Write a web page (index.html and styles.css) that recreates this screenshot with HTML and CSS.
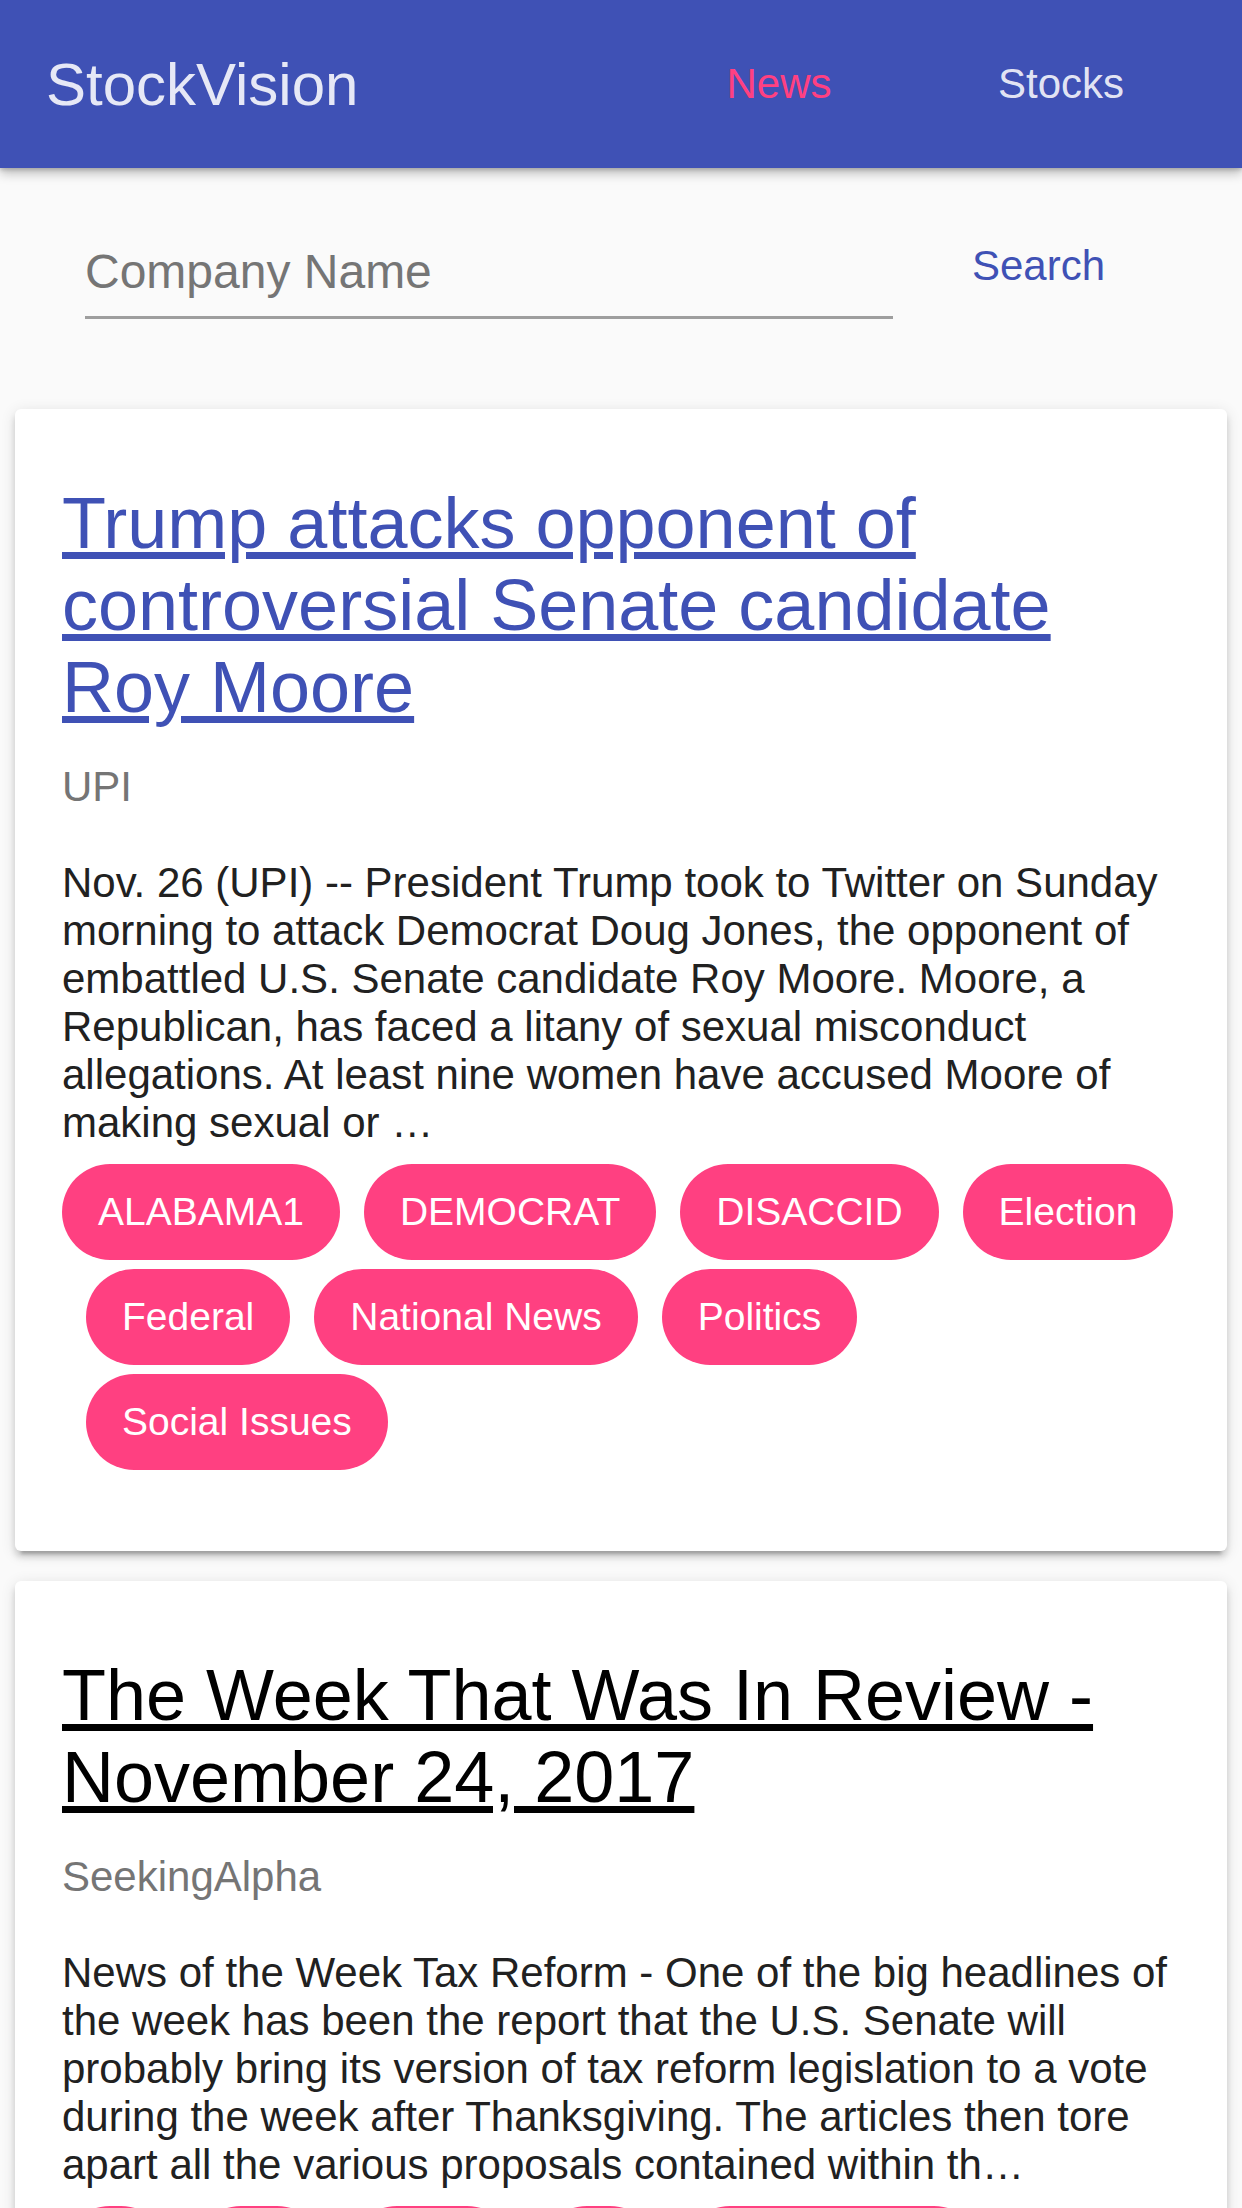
FILE: index.html
```html
<!DOCTYPE html>
<html lang="en">
<head>
<meta charset="utf-8">
<title>StockVision</title>
<link rel="stylesheet" href="styles.css">
</head>
<body>
<header class="topbar">
  <div class="logo">StockVision</div>
  <nav class="tabs">
    <a class="tab tab-active" href="#">News</a>
    <a class="tab" href="#">Stocks</a>
  </nav>
</header>

<section class="search">
  <input class="search-input" type="text" placeholder="Company Name">
  <button class="search-btn" type="button">Search</button>
</section>

<main class="feed">
  <article class="card">
    <a class="card-title" href="#">Trump attacks opponent of controversial Senate candidate Roy Moore</a>
    <div class="card-source">UPI</div>
    <p class="card-desc">Nov. 26 (UPI) -- President Trump took to Twitter on Sunday morning to attack Democrat Doug Jones, the opponent of embattled U.S. Senate candidate Roy Moore. Moore, a Republican, has faced a litany of sexual misconduct allegations. At least nine women have accused Moore of making sexual or …</p>
    <div class="chips">
      <span class="chip">ALABAMA1</span>
      <span class="chip">DEMOCRAT</span>
      <span class="chip">DISACCID</span>
      <span class="chip">Election</span>
      <span class="chip">Federal</span>
      <span class="chip">National News</span>
      <span class="chip">Politics</span>
      <span class="chip">Social Issues</span>
    </div>
  </article>

  <article class="card">
    <a class="card-title card-title-visited" href="#">The Week That Was In Review - November 24, 2017</a>
    <div class="card-source">SeekingAlpha</div>
    <p class="card-desc">News of the Week Tax Reform - One of the big headlines of the week has been the report that the U.S. Senate will probably bring its version of tax reform legislation to a vote during the week after Thanksgiving. The articles then tore apart all the various proposals contained within th…</p>
    <div class="chips">
      <span class="chip">IT</span>
      <span class="chip">Tax</span>
      <span class="chip">ETFs</span>
      <span class="chip">Oil</span>
      <span class="chip">Stock Market</span>
    </div>
  </article>
</main>
</body>
</html>
```

FILE: styles.css
```css
html, body {
  margin: 0;
  padding: 0;
}

body {
  background: #fafafa;
  font-family: "Liberation Sans", Arial, sans-serif;
  color: #212121;
}

.topbar {
  position: relative;
  z-index: 2;
  height: 168px;
  background: #3f51b5;
  display: flex;
  align-items: center;
  justify-content: space-between;
  padding: 0 40px 0 46px;
  box-shadow: 0 6px 10px rgba(0, 0, 0, 0.22), 0 2px 4px rgba(0, 0, 0, 0.18);
}

.logo {
  font-size: 60px;
  color: rgba(255, 255, 255, 0.87);
}

.tabs {
  display: flex;
}

.tab {
  width: 282px;
  text-align: center;
  font-size: 42px;
  color: rgba(255, 255, 255, 0.87);
  text-decoration: none;
}

.tab-active {
  color: #ff4081;
}

.search {
  display: flex;
  align-items: flex-start;
  padding: 76px 0 0 85px;
  margin-bottom: 90px;
}

.search-input {
  box-sizing: content-box;
  width: 808px;
  height: 56px;
  margin: 0;
  padding: 0 0 16px 0;
  border: none;
  border-bottom: 3px solid #9e9e9e;
  background: transparent;
  font-family: "Liberation Sans", Arial, sans-serif;
  font-size: 48px;
  line-height: 56px;
  color: #212121;
  outline: none;
}

.search-input::placeholder {
  color: #757575;
  opacity: 1;
}

.search-btn {
  margin: -2px 0 0 79px;
  padding: 0;
  border: none;
  background: none;
  font-family: "Liberation Sans", Arial, sans-serif;
  font-size: 42px;
  line-height: normal;
  color: #3f51b5;
}

.feed {
  padding: 0 15px;
}

.card {
  background: #ffffff;
  border-radius: 6px;
  padding: 73px 47px 72px 47px;
  margin-bottom: 30px;
  box-shadow: 0 6px 6px rgba(0, 0, 0, 0.14), 0 9px 3px -6px rgba(0, 0, 0, 0.2), 0 3px 15px rgba(0, 0, 0, 0.12);
}

.card-title {
  display: block;
  font-size: 72px;
  line-height: 82px;
  color: #3f51b5;
  text-decoration: underline;
}

.card-title-visited {
  color: #000000;
}

.card-source {
  margin-top: 35px;
  font-size: 42px;
  line-height: 48px;
  color: #757575;
}

.card-desc {
  margin: 48px 0 0 0;
  font-size: 42px;
  line-height: 48px;
  color: #212121;
}

.chips {
  display: flex;
  flex-wrap: wrap;
  margin-top: 17px;
}

.chip {
  height: 96px;
  line-height: 96px;
  padding: 0 36px;
  margin: 0 0 9px 24px;
  border-radius: 48px;
  background: #ff4081;
  color: #ffffff;
  font-size: 39px;
  white-space: nowrap;
}

.chip:first-child {
  margin-left: 0;
}
```
